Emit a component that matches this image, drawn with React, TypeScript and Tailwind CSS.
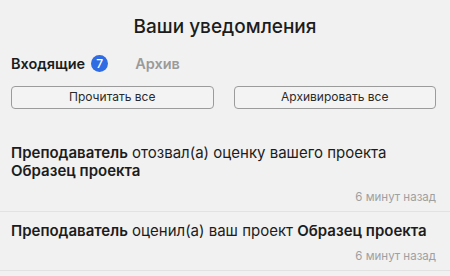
export default function App() {
  return (
    <div className="h-[276px] w-[450px] overflow-hidden bg-[#f1f1f1] text-[#1c1c1c] font-['Inter',sans-serif]">
      <h1 className="pt-[13px] text-center text-[19px] font-medium leading-[28px]">Ваши уведомления</h1>
      <div className="mt-[12px] flex items-center pl-[11px] pr-[14px]">
        <span className="text-[14.5px] font-semibold">Входящие</span>
        <span className="ml-[6px] flex h-[17px] w-[17px] items-center justify-center rounded-full bg-[#2f6be3] text-[12px] font-medium text-white">7</span>
        <span className="ml-[27px] text-[14.5px] font-semibold text-[#9a9a9a]">Архив</span>
      </div>
      <div className="mt-[11px] flex gap-[20px] pl-[11px] pr-[14px]">
        <button className="h-[23px] flex-1 rounded-[4px] border border-[#9b9b9b] bg-[#f3f3f3] text-[12px] text-[#2a2a2a]">Прочитать все</button>
        <button className="h-[23px] flex-1 rounded-[4px] border border-[#9b9b9b] bg-[#f3f3f3] text-[12px] text-[#2a2a2a]">Архивировать все</button>
      </div>
      <div className="mt-[35px]">
        <div className="border-b border-[#e2e2e2] pl-[11px] pr-[14px] pb-[6px]">
          <p className="text-[15px] leading-[18px]">
            <b className="font-semibold">Преподаватель</b> отозвал(а) оценку вашего проекта <b className="font-semibold">Образец проекта</b>
          </p>
          <p className="mt-[9px] text-right text-[11.5px] leading-[16px] text-[#a0a0a0]">6 минут назад</p>
        </div>
        <div className="border-b border-[#e2e2e2] pl-[11px] pr-[14px] pt-[10px] pb-[6px]">
          <p className="text-[15px] leading-[18px]">
            <b className="font-semibold">Преподаватель</b> оценил(а) ваш проект <b className="font-semibold">Образец проекта</b>
          </p>
          <p className="mt-[8px] text-right text-[11.5px] leading-[16px] text-[#a0a0a0]">6 минут назад</p>
        </div>
      </div>
    </div>
  );
}
